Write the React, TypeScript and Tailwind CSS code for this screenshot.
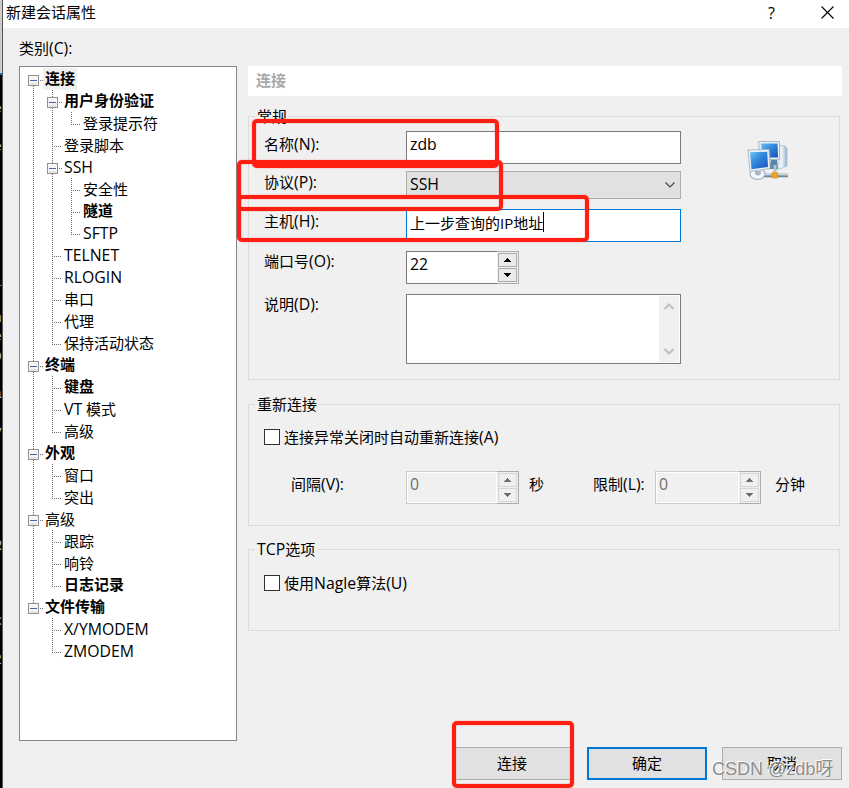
import type { ReactNode } from "react";
import clsx from "clsx";

type TreeNode = {
  label: string;
  bold?: boolean;
  selected?: boolean;
  children?: TreeNode[];
};

const categories: TreeNode[] = [
  {
    label: "连接",
    bold: true,
    selected: true,
    children: [
      { label: "用户身份验证", bold: true, children: [{ label: "登录提示符" }] },
      { label: "登录脚本" },
      {
        label: "SSH",
        children: [
          { label: "安全性" },
          { label: "隧道", bold: true },
          { label: "SFTP" },
        ],
      },
      { label: "TELNET" },
      { label: "RLOGIN" },
      { label: "串口" },
      { label: "代理" },
      { label: "保持活动状态" },
    ],
  },
  {
    label: "终端",
    bold: true,
    children: [
      { label: "键盘", bold: true },
      { label: "VT 模式" },
      { label: "高级" },
    ],
  },
  {
    label: "外观",
    bold: true,
    children: [{ label: "窗口" }, { label: "突出" }],
  },
  {
    label: "高级",
    children: [
      { label: "跟踪" },
      { label: "响铃" },
      { label: "日志记录", bold: true },
    ],
  },
  {
    label: "文件传输",
    bold: true,
    children: [{ label: "X/YMODEM" }, { label: "ZMODEM" }],
  },
];

// one character per terminal line, right edge of the window behind
const terminal = [
  "e", "", "e", "", "", "", "", "-", "", "_", "", "n", "e", "o", "", "a", "",
  "v", "", "", "", "", "", "R", "", "", "", "<", "", "2",
];

// Latin runs are set a little larger than the Chinese text around them
function Label({ text }: { text: string }) {
  return (
    <>
      {text.split(/([!-~]+)/).map((part, index) =>
        index % 2 ? (
          <span key={index} className="text-[15.8px]">
            {part}
          </span>
        ) : (
          part
        )
      )}
    </>
  );
}

function Guide({ from = 0, to = 22, branch = false }) {
  return (
    <svg width="19" height="22" className="shrink-0" shapeRendering="crispEdges">
      {to > from && (
        <path d={`M9.5 ${from}V${to}`} stroke="#6e6e6e" strokeDasharray="1 1" />
      )}
      {branch && (
        <path d="M11 12.5H18" stroke="#6e6e6e" strokeDasharray="1 1" />
      )}
    </svg>
  );
}

function Expander({ first, last }: { first: boolean; last: boolean }) {
  return (
    <svg width="19" height="22" className="shrink-0" shapeRendering="crispEdges">
      {!first && <path d="M9.5 0V7" stroke="#6e6e6e" strokeDasharray="1 1" />}
      {!last && <path d="M9.5 18V22" stroke="#6e6e6e" strokeDasharray="1 1" />}
      <rect x="4.5" y="7.5" width="10" height="10" fill="#f6f6f6" stroke="#919191" />
      <path d="M6 15.5H13M6 16.5H13" stroke="#e2e2e2" />
      <path d="M6 12.5H13" stroke="#4b63a7" />
      <path d="M16 12.5H19" stroke="#6e6e6e" strokeDasharray="1 1" />
    </svg>
  );
}

function Branch({
  nodes,
  trail = [],
}: {
  nodes: TreeNode[];
  trail?: boolean[];
}) {
  return (
    <>
      {nodes.map((node, index) => {
        const last = index === nodes.length - 1;
        const first = trail.length === 0 && index === 0;

        return (
          <div key={node.label}>
            <div className="flex h-[22px]">
              {trail.map((open, level) => (
                <Guide key={level} to={open ? 22 : 0} />
              ))}
              {node.children ? (
                <Expander first={first} last={last} />
              ) : (
                <Guide to={last ? 13 : 22} branch />
              )}
              <span
                className={clsx(
                  "px-[2px] whitespace-nowrap",
                  node.bold ? "leading-[20px] font-bold" : "leading-[22px]",
                  node.selected && "bg-[#f0f0f0]"
                )}
              >
                <Label text={node.label} />
              </span>
            </div>
            {node.children && (
              <Branch nodes={node.children} trail={[...trail, !last]} />
            )}
          </div>
        );
      })}
    </>
  );
}

function Group({
  title,
  className,
  children,
}: {
  title: string;
  className?: string;
  children: ReactNode;
}) {
  return (
    <section className={clsx("w-[592px] border border-[#dcdcdc]", className)}>
      <h2 className="-mt-[11px] ml-[6px] h-5 w-fit bg-[#f0f0f0] px-[2px] leading-5">
        <Label text={title} />
      </h2>
      {children}
    </section>
  );
}

function Spinner({
  value,
  disabled = false,
  className,
}: {
  value: string;
  disabled?: boolean;
  className?: string;
}) {
  const arrow = disabled ? "#6d6d6d" : "#000";
  const button = clsx(
    "flex h-[14px] w-[19px] items-center justify-center border",
    disabled ? "border-[#d5d5d5] bg-[#f0f0f0]" : "border-[#acacac] bg-[#ebebeb]"
  );

  return (
    <div className={clsx("flex h-[33px]", className)}>
      <div
        className={clsx(
          "flex-1 border border-r-0 pl-[3px] text-[15.8px] leading-[24px]",
          disabled
            ? "border-[#cccccc] text-[#6d6d6d] shadow-[inset_0_0_0_1px_#fff]"
            : "border-[#7a7a7a] bg-white"
        )}
      >
        {value}
      </div>
      <div className="flex w-[22px] flex-col gap-px border border-l-0 border-[#abadb3] pt-px pl-px">
        <div className={button}>
          <svg width="7" height="4" shapeRendering="crispEdges">
            <path d="M3 0h1v1h1v1h1v1h1v1H0V3h1V2h1V1h1z" fill={arrow} />
          </svg>
        </div>
        <div className={button}>
          <svg width="7" height="4" shapeRendering="crispEdges">
            <path d="M0 0h7v1H6v1H5v1H4v1H3V3H2V2H1V1H0z" fill={arrow} />
          </svg>
        </div>
      </div>
    </div>
  );
}

function Checkbox({ label }: { label: string }) {
  return (
    <div className="flex h-4 items-center">
      <span className="size-4 border border-[#333] bg-white" />
      <span className="ml-1 leading-5">
        <Label text={label} />
      </span>
    </div>
  );
}

function NetworkIcon() {
  return (
    <svg width="42" height="42" viewBox="0 0 42 42">
      <defs>
        <linearGradient id="screen" x1="0" y1="0" x2="1" y2="1">
          <stop offset="0" stopColor="#6cc3f4" />
          <stop offset="0.45" stopColor="#3287dc" />
          <stop offset="1" stopColor="#1c4fbe" />
        </linearGradient>
        <linearGradient id="tower" x1="0" y1="0" x2="1" y2="0">
          <stop offset="0" stopColor="#b9cbdb" />
          <stop offset="0.6" stopColor="#eef4f9" />
          <stop offset="1" stopColor="#93b0c8" />
        </linearGradient>
      </defs>
      <path d="M31 5L38 6L40 8V26L33 29H27Z" fill="url(#tower)" stroke="#a3bacc" strokeWidth="0.7" />
      <path d="M24 20L30 20L31 29H22Z" fill="#5787a8" />
      <path d="M11.5 1.5H32.5V19.5H13Z" fill="#e6eef4" stroke="#a9bac7" />
      <path d="M14 3.5H30.5L31 17.5H16Z" fill="url(#screen)" />
      <ellipse cx="10.5" cy="34" rx="7.5" ry="5.5" fill="#f4f8fb" stroke="#b2c1cc" strokeWidth="1.5" />
      <path d="M8 31H14V34Q11 37 8 34Z" fill="#a7b8c5" />
      <path d="M1 10L22 9.5L23 28.5L3 31.5Z" fill="#edf3f7" stroke="#a9bac7" />
      <path d="M3 12.2L20.2 11.8L21 27L4.5 29.2Z" fill="url(#screen)" />
      <path d="M17 35.5H41" stroke="#718b9b" strokeWidth="3.6" />
      <path d="M17 34.7H41" stroke="#c6d6df" strokeWidth="1.4" />
      <path d="M28 25V32" stroke="#b4c5d1" strokeWidth="3" />
      <rect x="25.2" y="32.5" width="5.6" height="5.6" rx="0.8" fill="#f9a11c" stroke="#d58413" strokeWidth="0.6" />
    </svg>
  );
}

function Highlight({ className }: { className: string }) {
  return (
    <div
      className={clsx(
        "absolute rounded-[5px] border-4 border-[#ff1e12] shadow-[0_0_1px_#ff1e12,inset_0_0_1px_#ff1e12]",
        className
      )}
    />
  );
}

export default function App() {
  return (
    <div className="relative flex h-[788px] w-[849px] overflow-hidden bg-[#f0f0f0] font-['Open_Sans','Noto_Sans_CJK_SC',sans-serif] text-[15px] text-black">
      {/* Window behind */}
      <div className="w-[3px] shrink-0 overflow-hidden border-r border-[#555] bg-black">
        <div className="h-[73px] bg-[#cdcdcd]" />
        <div className="h-[2px] bg-[#0078d7]" />
        <div className="flex flex-col items-end pt-[25px] font-['Liberation_Mono',monospace] text-[14px] text-[#a8c4d8]">
          {terminal.map((char, index) => (
            <span key={index} className="h-[19px] leading-[19px]">
              {char}
            </span>
          ))}
        </div>
      </div>

      <main className="flex flex-1 flex-col">
        <header className="flex h-7 shrink-0 items-center bg-white pl-[3px]">
          <h1 className="flex-1 pb-1">新建会话属性</h1>
          <span className="mr-[46px] pb-[3px] text-[16px]">?</span>
          <svg width="13" height="13" className="mr-[15px] mb-1">
            <path d="M0.5 0.5L12.5 12.5M12.5 0.5L0.5 12.5" stroke="#000" strokeWidth="1.1" />
          </svg>
        </header>

        <div className="flex">
          {/* Categories */}
          <div className="ml-4 w-[218px] shrink-0">
            <p className="mt-[10px] mb-2 h-5 leading-5">
              <Label text="类别(C):" />
            </p>
            <div className="h-[675px] border border-[#828790] bg-white pt-px pl-1">
              <Branch nodes={categories} />
            </div>
          </div>

          {/* Connection page */}
          <div className="ml-[11px] w-[594px] shrink-0">
            <h2 className="mt-[38px] h-[30px] bg-white pl-2 leading-[28px] font-bold text-[#a8a8a8]">
              连接
            </h2>

            <Group title="常规" className="mt-5 h-[264px]">
              <div className="flex">
                <div className="mt-[5px] ml-[15px] w-[417px]">
                  <div className="flex">
                    <span className="w-[142px] pt-[3px] leading-5">
                      <Label text="名称(N):" />
                    </span>
                    <div className="h-[33px] w-[275px] border border-[#7a7a7a] bg-white pl-[3px] text-[15.8px] leading-[24px]">
                      zdb
                    </div>
                  </div>

                  <div className="mt-[7px] flex">
                    <span className="w-[142px] pt-px leading-5">
                      <Label text="协议(P):" />
                    </span>
                    <div className="flex h-7 w-[275px] items-center justify-between border border-[#adadad] bg-[#e1e1e1] pr-[5px] pl-[3px]">
                      <Label text="SSH" />
                      <svg width="10" height="6">
                        <path d="M0.5 0.5L5 5L9.5 0.5" fill="none" stroke="#444" strokeWidth="1.1" />
                      </svg>
                    </div>
                  </div>

                  <div className="mt-[10px] flex">
                    <span className="w-[142px] pt-[2px] leading-5">
                      <Label text="主机(H):" />
                    </span>
                    <div className="flex h-[33px] w-[275px] border border-[#0078d7] bg-white pl-[3px] leading-[26px]">
                      上一步查询的IP地址
                      <span className="mt-[2px] h-5 w-px bg-black" />
                    </div>
                  </div>

                  <div className="mt-[9px] flex">
                    <span className="w-[142px] leading-5">
                      <Label text="端口号(O):" />
                    </span>
                    <Spinner value="22" className="w-[113px]" />
                  </div>

                  <div className="mt-[10px] flex">
                    <span className="w-[142px] leading-5">
                      <Label text="说明(D):" />
                    </span>
                    <div className="flex h-[70px] w-[275px] justify-end border border-[#7a7a7a] bg-white p-px">
                      <div className="flex w-5 flex-col items-center justify-between bg-[#f0f0f0] py-[7px]">
                        <svg width="10" height="7">
                          <path d="M0.5 6L5 1.5L9.5 6" fill="none" stroke="#bfbfbf" strokeWidth="2" />
                        </svg>
                        <svg width="10" height="7">
                          <path d="M0.5 1L5 5.5L9.5 1" fill="none" stroke="#bfbfbf" strokeWidth="2" />
                        </svg>
                      </div>
                    </div>
                  </div>
                </div>

                <div className="mt-[14px] ml-[66px]">
                  <NetworkIcon />
                </div>
              </div>
            </Group>

            <Group title="重新连接" className="mt-6 h-[122px]">
              <div className="mt-[15px] ml-[15px]">
                <Checkbox label="连接异常关闭时自动重新连接(A)" />
              </div>
              <div className="mt-[26px] ml-[42px] flex leading-5">
                <span className="w-[115px] pt-[3px]">
                  <Label text="间隔(V):" />
                </span>
                <Spinner value="0" disabled className="w-[113px]" />
                <span className="ml-[10px] w-16 pt-[3px]">秒</span>
                <span className="w-[62px] pt-[3px] whitespace-nowrap">
                  <Label text="限制(L):" />
                </span>
                <Spinner value="0" disabled className="w-[106px]" />
                <span className="ml-[14px] pt-[3px]">分钟</span>
              </div>
            </Group>

            <Group title="TCP选项" className="mt-[23px] h-[82px]">
              <div className="mt-4 ml-[15px]">
                <Checkbox label="使用Nagle算法(U)" />
              </div>
            </Group>

            <footer className="mt-[116px] flex justify-end gap-[15px] text-center">
              <button className="h-[33px] w-[120px] border border-[#adadad] bg-[#e1e1e1]">
                连接
              </button>
              <button className="h-[33px] w-[120px] border-2 border-[#0078d7] bg-[#e1e1e1]">
                确定
              </button>
              <button className="h-[33px] w-[120px] border border-[#adadad] bg-[#e1e1e1]">
                取消
              </button>
            </footer>
          </div>
        </div>
      </main>

      {/* Annotations */}
      <Highlight className="top-[119px] left-[252px] h-[49px] w-[247px]" />
      <Highlight className="top-[160px] left-[237px] h-[51px] w-[266px]" />
      <Highlight className="top-[195px] left-[237px] h-[47px] w-[352px]" />
      <Highlight className="top-[721px] left-[452px] h-[67px] w-[122px]" />

      <span className="absolute top-[755px] left-[712px] font-['Liberation_Sans','Noto_Sans_CJK_SC',sans-serif] text-[18px] leading-7 whitespace-nowrap text-[#8f8f8f] [text-shadow:-1px_-1px_0_#fff]">
        CSDN @zdb呀
      </span>
    </div>
  );
}
